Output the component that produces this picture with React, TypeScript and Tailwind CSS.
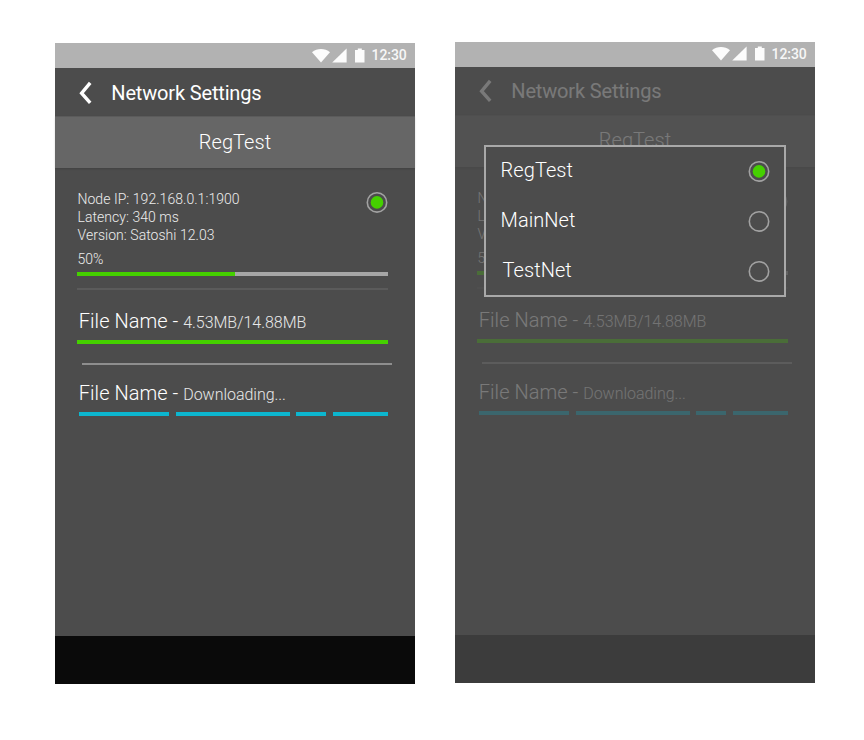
import type { ReactNode } from "react";

function Radio({ checked = false }: { checked?: boolean }) {
  return (
    <svg width="22" height="22" viewBox="0 0 22 22" className="shrink-0">
      <circle cx="11" cy="11.4" r="9.7" fill="none" stroke="#a2a2a2" strokeWidth="1.6" />
      {checked && <circle cx="11" cy="11.4" r="6.3" fill="#45d000" />}
    </svg>
  );
}

function StatusBar() {
  return (
    <div className="flex h-[25px] items-center bg-[#b2b2b2] pl-[257px] text-[14px] text-white">
      <svg width="54" height="16" viewBox="0 0 54 16" fill="#fcfcfc" className="shrink-0">
        <path d="M0 4.2C5 -.2 13 -.2 18 4.2L9 14.4z" />
        <path d="M34.6 .6v13.8H20.2z" />
        <path d="M43 2.1h2.8V.6h4v1.5h2.7v12.3H43z" />
      </svg>
      <span className="ml-[5.6px] whitespace-nowrap font-medium tracking-[-0.1px] opacity-90">12:30</span>
    </div>
  );
}

function FileRow({ detail, children }: { detail: string; children: ReactNode }) {
  return (
    <div className="mx-[23px]">
      <p className="h-6 whitespace-nowrap pl-[0.8px] text-[20px] leading-6 tracking-[0.04px]">
        File Name - <span className="text-[16px] tracking-[-0.03px] text-[#e8e8e8]">{detail}</span>
      </p>
      {children}
    </div>
  );
}

function Screen({ raised = false }: { raised?: boolean }) {
  const lift = raised ? "pb-0.5" : "";
  return (
    <>
      <header className={`flex h-12 items-center bg-[#4c4c4c] pl-6 text-[20px] text-white ${lift}`}>
        <svg width="13" height="24" viewBox="0 0 13 24" className="shrink-0">
          <path d="M11.2 2.8L2.6 13.2L11.2 22.8" fill="none" stroke="#fff" strokeWidth="3.4" />
        </svg>
        <h1 className="ml-[19.3px] whitespace-nowrap pt-0.5 tracking-[-0.16px]">Network Settings</h1>
      </header>
      <div className="flex h-[52px] items-center justify-center border-t border-[#5b5b5b] bg-[#666] pb-0.5 text-[20px] font-light tracking-[0.05px] text-white shadow-[0_1px_2px_rgba(0,0,0,0.15)]">
        RegTest
      </div>
      <main className="flex flex-1 flex-col font-light text-white">
        <div className="mx-[22.5px] mt-[22px] flex justify-between">
          <div className="text-[14px] leading-[18px] tracking-[0.04px] text-[#ececec]">
            <p>Node IP: 192.168.0.1:1900</p>
            <p>Latency: 340 ms</p>
            <p>Version: Satoshi 12.03</p>
            <p className="mt-1.5">50%</p>
          </div>
          <div className="mr-[4.5px] mt-px">
            <Radio checked />
          </div>
        </div>
        <div className="ml-[22.4px] mr-[27px] mt-1 h-1 bg-[#a6a6a6]">
          <div className="h-full w-[157.5px] bg-[#45d000]" />
        </div>
        <div className="ml-[22.4px] mr-[27px] mt-[12px] h-[2px] bg-[#5b5b5b]" />
        <div className="mt-[19px]">
          <FileRow detail="4.53MB/14.88MB">
            <div className="-ml-[0.6px] mr-1 mt-[7px] h-1 bg-[#45d000]" />
          </FileRow>
        </div>
        <div className="ml-[27px] mr-[22.6px] mt-[19px] h-[2px] bg-[#8e8e8e]" />
        <div className="mt-4">
          <FileRow detail="Downloading...">
            <div className="ml-[0.5px] mr-1 mt-[7px] flex h-1 justify-between *:bg-[#0cb6cf]">
              <div className="w-[90.5px]" />
              <div className="w-[114px]" />
              <div className="w-[30px]" />
              <div className="w-[55px]" />
            </div>
          </FileRow>
        </div>
      </main>
      <footer className="h-12 bg-[#0a0a0a]" />
    </>
  );
}

function NetworkMenu() {
  const options = [
    { name: "RegTest", indent: "" },
    { name: "MainNet", indent: "" },
    { name: "TestNet", indent: "pl-[2px]" },
  ];
  return (
    <div className="absolute left-[29px] top-[103.4px] flex h-[152px] w-[302px] flex-col border-2 border-[#a9a9a9] bg-[#4c4c4c] pl-[14.6px] pr-[14.4px] font-light text-white">
      {options.map((option, index) => (
        <div
          key={option.name}
          className="flex h-[50px] shrink-0 items-center justify-between text-[20px] tracking-[0.05px] first:-mt-px"
        >
          <span className={`pb-0.5 ${option.indent}`}>{option.name}</span>
          <Radio checked={index === 0} />
        </div>
      ))}
    </div>
  );
}

export default function App() {
  return (
    <div className="flex h-[740px] w-[864px] items-start gap-10 bg-white pl-[55px] font-['Roboto',sans-serif]">
      <section className="mt-[43px] flex h-[641px] w-[360px] flex-col bg-[#4c4c4c]">
        <StatusBar />
        <Screen />
      </section>
      <section className="relative mt-[41.6px] flex h-[641px] w-[360px] flex-col bg-[#4c4c4c]">
        <StatusBar />
        <div className="flex flex-1 flex-col opacity-25">
          <Screen raised />
        </div>
        <NetworkMenu />
      </section>
    </div>
  );
}
